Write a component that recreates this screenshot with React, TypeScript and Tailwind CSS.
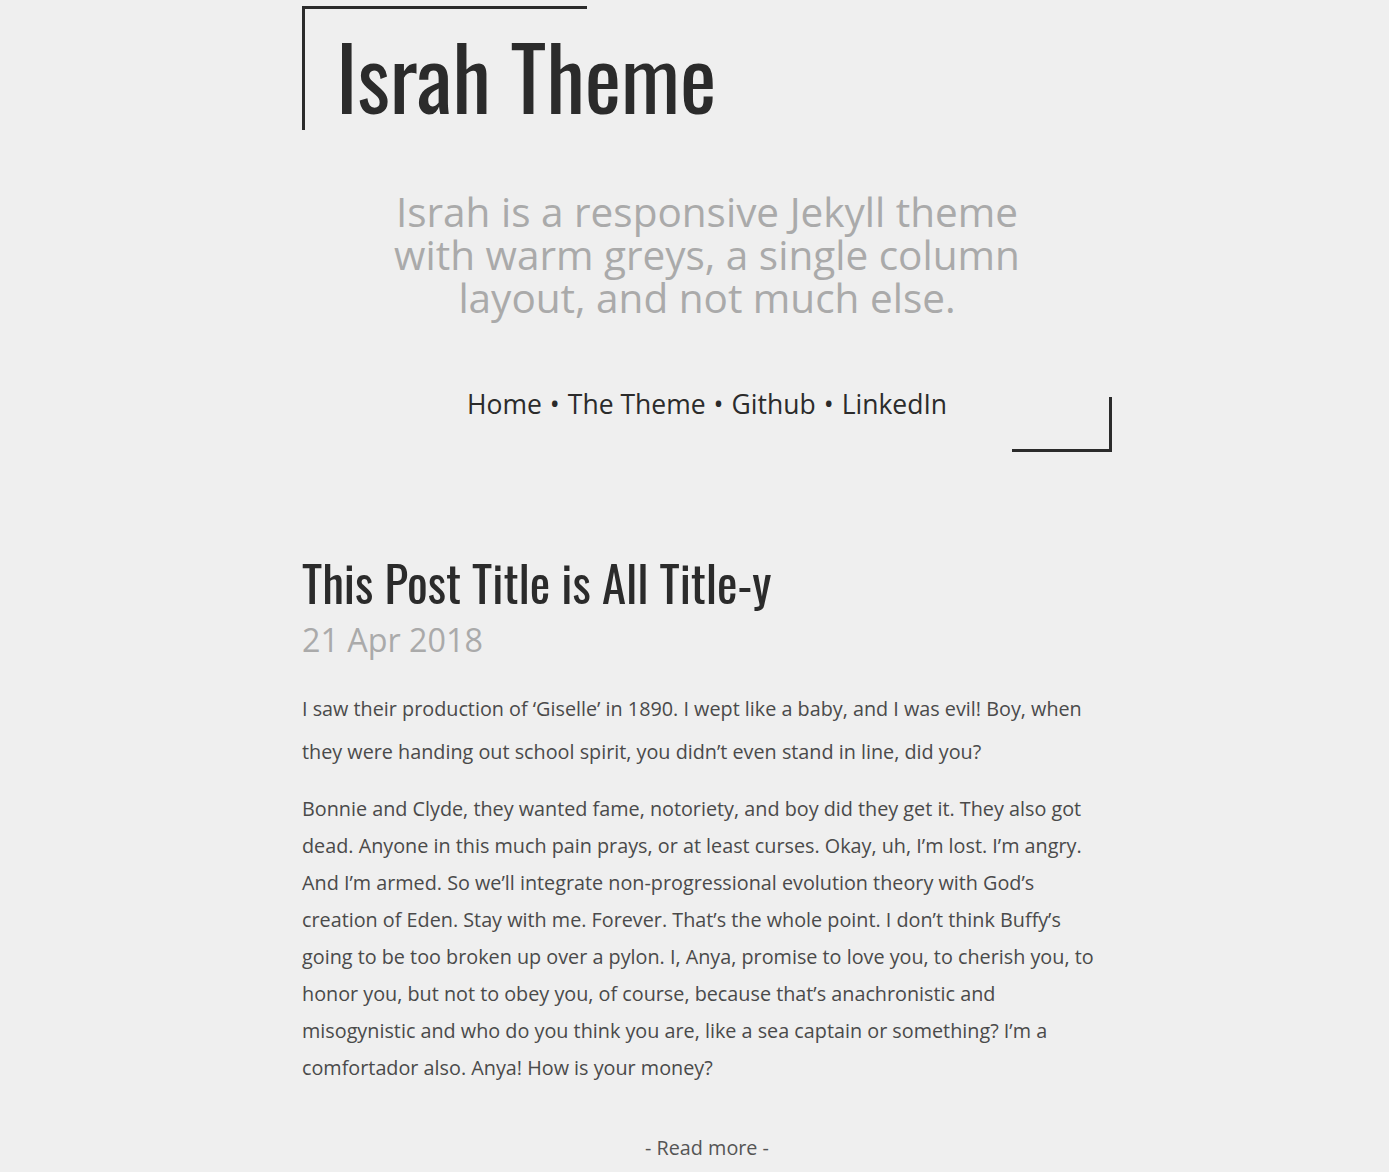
const navLinks = ["Home", "The Theme", "Github", "LinkedIn"];

export default function App() {
  return (
    <div className="min-h-screen bg-[#efefef] font-['Open_Sans',sans-serif] text-[#2b2b2b]">
      <div className="ml-[302px] w-[810px] pt-[6px] pb-10">
        {/* header with the corner brackets */}
        <header className="relative">
          <span className="absolute left-0 top-0 h-[3px] w-[285px] bg-[#2b2b2b]" />
          <span className="absolute left-0 top-0 h-[124px] w-[3px] bg-[#2b2b2b]" />
          <h1 className="pl-[34px] pt-[14px] font-['Oswald',sans-serif] text-[86.5px] leading-[110px] font-normal">
            Israh Theme
          </h1>
        </header>

        <p className="mx-auto mt-[60px] w-[660px] text-center text-[40.5px] leading-[43px] text-[#aaaaaa]">
          Israh is a responsive Jekyll theme with warm greys, a single column layout, and not much else.
        </p>

        <nav className="relative mt-[67px] h-[66px]">
          <div className="flex justify-center text-[26.5px] leading-[36px] text-[#2b2b2b]">
            {navLinks.map((l, i) => (
              <span key={l}>
                {i > 0 && <span className="px-[8px]">•</span>}
                <a href="#">{l}</a>
              </span>
            ))}
          </div>
          <span className="absolute right-0 top-[11px] h-[55px] w-[100px] border-b-[3px] border-r-[3px] border-[#2b2b2b]" />
        </nav>

        <article className="mt-[100px]">
          <h2 className="font-['Oswald',sans-serif] text-[48.8px] leading-[60px] font-normal">
            This Post Title is All Title-y
          </h2>
          <div className="mt-[7px] text-[32.3px] leading-[40px] text-[#aaaaaa]">21 Apr 2018</div>

          <p className="mt-[28px] text-[19.8px] leading-[43px] text-[#4a4a4a]">
            I saw their production of ‘Giselle’ in 1890. I wept like a baby, and I was evil! Boy, when they were
            handing out school spirit, you didn’t even stand in line, did you?
          </p>
          <p className="mt-[17px] text-[19.8px] leading-[37px] text-[#4a4a4a]">
            Bonnie and Clyde, they wanted fame, notoriety, and boy did they get it. They also got dead. Anyone in
            this much pain prays, or at least curses. Okay, uh, I’m lost. I’m angry. And I’m armed. So we’ll
            integrate non-progressional evolution theory with God’s creation of Eden. Stay with me. Forever.
            That’s the whole point. I don’t think Buffy’s going to be too broken up over a pylon. I, Anya, promise
            to love you, to cherish you, to honor you, but not to obey you, of course, because that’s
            anachronistic and misogynistic and who do you think you are, like a sea captain or something? I’m a
            comfortador also. Anya! How is your money?
          </p>

          <div className="mt-[47px] text-center text-[19.8px] leading-[30px] text-[#555555]">
            <a href="#">- Read more -</a>
          </div>
        </article>
      </div>
    </div>
  );
}
